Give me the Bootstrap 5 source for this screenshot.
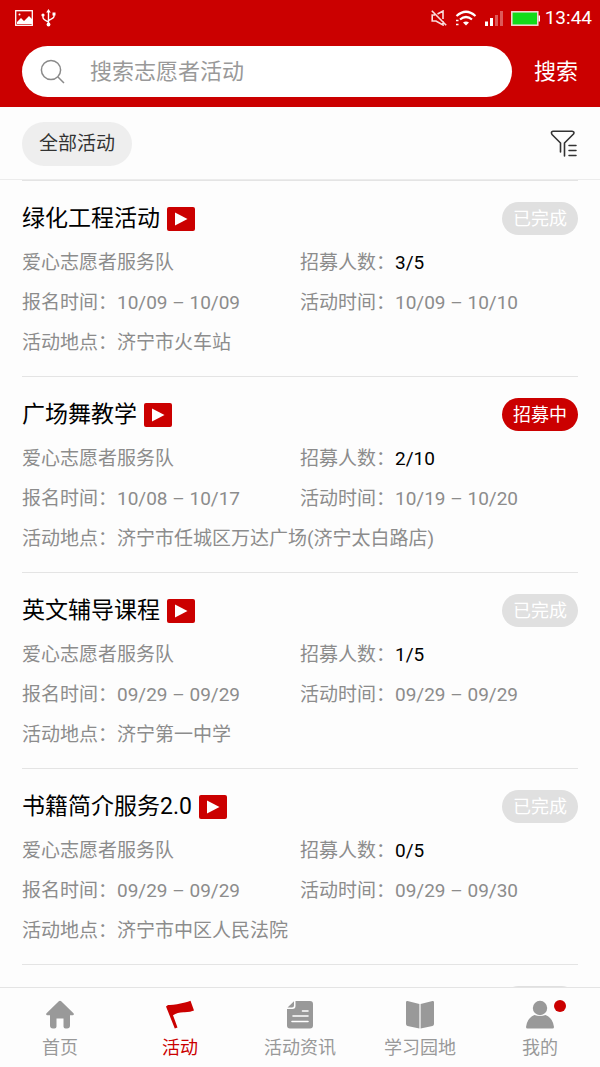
<!DOCTYPE html>
<html lang="zh-CN">
<head>
<meta charset="utf-8">
<meta name="viewport" content="width=device-width, initial-scale=1">
<title>志愿者活动</title>
<link href="https://cdn.jsdelivr.net/npm/bootstrap@5.3.0/dist/css/bootstrap.min.css" rel="stylesheet">
<style>
  :root { --brand: #cb0000; --muted: #8c8c8c; --line: #e4e4e4; }
  body { font-family: Roboto, "Noto Sans CJK SC", sans-serif; font-size: 19px; color: #000; background: #fdfdfd; }
  svg { display: block; flex: none; }
  .app-head { background: var(--brand); padding-bottom: 10px; }
  .status-bar { height: 36px; padding: 0 8px 0 15px; line-height: 36px; }
  .search-row { padding: 0 22px; gap: 22px; margin-top: 10px; }
  .search-box { height: 51px; background: #fff; padding: 0 18px; gap: 25px; }
  .search-box input { font-size: 22px; outline: 0; min-width: 0; }
  .search-box input::placeholder { color: #999; opacity: 1; }
  .search-row button { font-size: 22px; line-height: 32px; }
  .filter-row { padding: 15px 22px 13px; border-bottom: 1px solid #ececec; }
  .pill-all { height: 44px; padding: 0 17px; background: #eee; color: #333; font-size: 19px; }
  .filter-btn { color: #333; }
  .activity { border-top: 1px solid var(--line); margin: 0 22px; padding: 18px 0 13px; }
  .activity header { height: 39px; margin-bottom: 5px; gap: 7px; }
  .activity h2 { font-size: 23px; line-height: 39px; font-weight: 400; }
  .facts { color: var(--muted); line-height: 40px; }
  .facts b { color: #000; font-weight: 400; }
  .state { height: 33px; line-height: 33px; min-width: 76px; font-size: 18px; text-align: center; background: #e0e0e0; color: #fff; }
  .state.open { background: var(--brand); }
  .tab-bar { border-top: 1px solid var(--line); background: #fdfdfd; height: 80px; padding-top: 12px; }
  .tab-bar a { color: #999; font-size: 18px; line-height: 26px; gap: 6px; text-decoration: none; }
  .tab-bar a.active { color: var(--brand); }
  .dot { width: 12px; height: 12px; background: var(--brand); top: 0; left: 28px; }
</style>
</head>
<body>
<svg class="d-none" aria-hidden="true">
  <symbol id="video" viewBox="0 0 28 24"><rect width="28" height="24" rx="2" fill="#cb0000"/><path d="M8 5.500v13l12.500-6.500z" fill="#fff"/></symbol>
</svg>
<div class="vh-100 d-flex flex-column overflow-hidden">
  <div class="app-head flex-shrink-0 text-white">
    <div class="status-bar d-flex align-items-center">
      <svg width="18" height="16" viewBox="0 0 18 16"><rect x=".7" y=".7" width="16.600" height="14.600" fill="none" stroke="#fff" stroke-width="1.300"/><path d="M2 14v-2l4-4 3 3 5-5 3 3v5z" fill="#fff"/><circle cx="4.500" cy="4.500" r="1" fill="#fff"/></svg>
      <svg class="ms-2" width="15" height="18" viewBox="0 0 15 18" fill="none" stroke="#fff" stroke-width="1.400"><path d="M7.500 2v13M2 6v2.500q0 2 5.500 4.500M13 5v2.500q0 1.500-5.500 4"/><path d="M7.500 0l2.300 3.500H5.200z" fill="#fff" stroke="none"/><circle cx="7.500" cy="15.500" r="1.900" fill="#fff" stroke="none"/><circle cx="2" cy="6" r="1.600" fill="#fff" stroke="none"/><path d="M11.500 3.500h3v3h-3z" fill="#fff" stroke="none"/></svg>
      <div class="ms-auto d-flex align-items-center">
        <svg width="16" height="16" viewBox="0 0 16 16" fill="none" stroke="#f9dcdc" stroke-width="1.600"><path d="M4 5H1.200v6H5l7 4V11M6.500 4L12 1v8M.8.800l14.400 14.400"/></svg>
        <svg class="ms-2" width="22" height="17" viewBox="0 0 22 17" fill="none" stroke="#fff" stroke-width="2.200"><path d="M1.500 6Q11-2.500 20.500 6M5 9.500q6-5 12 0"/><path d="M8 12.500q3-2 6 0l-3 3z" fill="#fff" stroke="none"/><path d="M1 10.500h2.500M1 14.500h2.500" stroke-width="1.500"/></svg>
        <svg class="ms-2" width="18" height="15" viewBox="0 0 18 15" fill="#fff"><path d="M0 10.500h3V15H0zM5 7h3v8H5z"/><path d="M10 4h3v11h-3zM15 0h3v15h-3z" opacity=".35"/></svg>
        <svg class="ms-2" width="30" height="15" viewBox="0 0 30 15"><rect x=".8" y=".8" width="26" height="13.400" fill="#13db1a" stroke="#f9dada" stroke-width="1.500"/><path d="M27.500 4.500H29v6h-1.500z" fill="#fff"/></svg>
        <span class="ms-1">13:44</span>
      </div>
    </div>
    <form class="search-row d-flex align-items-center" role="search">
      <div class="search-box d-flex align-items-center flex-grow-1 rounded-pill">
        <svg width="25" height="25" viewBox="0 0 25 25" fill="none" stroke="#8a8a8a" stroke-width="1.500"><circle cx="11" cy="11" r="9.600"/><path d="M18 18l6 6"/></svg>
        <input class="border-0 bg-transparent p-0 flex-grow-1" type="search" placeholder="搜索志愿者活动" aria-label="搜索志愿者活动">
      </div>
      <button class="border-0 bg-transparent p-0 text-white" type="button">搜索</button>
    </form>
  </div>

  <div class="filter-row d-flex align-items-center justify-content-between flex-shrink-0">
    <button class="pill-all border-0 rounded-pill" type="button">全部活动</button>
    <button class="filter-btn border-0 bg-transparent p-0" type="button" aria-label="筛选">
      <svg width="28" height="28" viewBox="0 0 28 28" fill="none" stroke="currentColor" stroke-width="1.600" stroke-linejoin="round" stroke-linecap="round"><path d="M10.500 22v-9L2 4.500Q.5 1.500 3 1.200h19Q25 1.500 23.500 4L14.500 13v13"/><path d="M19 15.500h7M19 20.500h7M19 25.500h7" stroke-width="1.500"/></svg>
    </button>
  </div>

  <main class="flex-grow-1 overflow-hidden">
    <article class="activity">
      <header class="d-flex align-items-center"><h2 class="m-0">绿化工程活动</h2><svg width="28" height="24"><use href="#video"/></svg><span class="state rounded-pill ms-auto">已完成</span></header>
      <div class="facts row g-0"><div class="col-6">爱心志愿者服务队</div><div class="col-6">招募人数：<b>3/5</b></div><div class="col-6">报名时间：10/09 – 10/09</div><div class="col-6">活动时间：10/09 – 10/10</div><div class="col-12">活动地点：济宁市火车站</div></div>
    </article>
    <article class="activity">
      <header class="d-flex align-items-center"><h2 class="m-0">广场舞教学</h2><svg width="28" height="24"><use href="#video"/></svg><span class="state open rounded-pill ms-auto">招募中</span></header>
      <div class="facts row g-0"><div class="col-6">爱心志愿者服务队</div><div class="col-6">招募人数：<b>2/10</b></div><div class="col-6">报名时间：10/08 – 10/17</div><div class="col-6">活动时间：10/19 – 10/20</div><div class="col-12">活动地点：济宁市任城区万达广场(济宁太白路店)</div></div>
    </article>
    <article class="activity">
      <header class="d-flex align-items-center"><h2 class="m-0">英文辅导课程</h2><svg width="28" height="24"><use href="#video"/></svg><span class="state rounded-pill ms-auto">已完成</span></header>
      <div class="facts row g-0"><div class="col-6">爱心志愿者服务队</div><div class="col-6">招募人数：<b>1/5</b></div><div class="col-6">报名时间：09/29 – 09/29</div><div class="col-6">活动时间：09/29 – 09/29</div><div class="col-12">活动地点：济宁第一中学</div></div>
    </article>
    <article class="activity">
      <header class="d-flex align-items-center"><h2 class="m-0">书籍简介服务2.0</h2><svg width="28" height="24"><use href="#video"/></svg><span class="state rounded-pill ms-auto">已完成</span></header>
      <div class="facts row g-0"><div class="col-6">爱心志愿者服务队</div><div class="col-6">招募人数：<b>0/5</b></div><div class="col-6">报名时间：09/29 – 09/29</div><div class="col-6">活动时间：09/29 – 09/30</div><div class="col-12">活动地点：济宁市中区人民法院</div></div>
    </article>
    <article class="activity">
      <header class="d-flex align-items-center"><span class="state rounded-pill ms-auto"></span></header>
    </article>
  </main>

  <nav class="tab-bar row g-0 flex-shrink-0">
    <a class="col d-flex flex-column align-items-center" href="#">
      <svg width="28" height="29" viewBox="0 0 28 29" fill="currentColor"><path d="M14 .8q.7 0 1.200.5L27.500 13.300q1 1.700-.9 2H24V25.500Q24 28.500 21 28.500h-1.500Q17.500 28.500 17.500 26.500V18.500h-7v8q0 2-2 2H7Q4 28.500 4 25.500V15.300H1.400q-1.900-.3-.9-2L12.800 1.300q.5-.5 1.200-.5z"/></svg>首页</a>
    <a class="col d-flex flex-column align-items-center active" href="#" aria-current="page">
      <svg width="28" height="29" viewBox="0 0 28 29" fill="currentColor"><path d="M0 6.500L2 5Q6 5.300 11 4.300T19 2.500 24.500.8L28 10.500Q24.500 12.300 18 12.200T7 15.200L11.500 27.500 8.800 28.500z"/></svg>活动</a>
    <a class="col d-flex flex-column align-items-center" href="#">
      <svg width="28" height="29" viewBox="0 0 28 29"><path d="M9.500 1H24Q27 1 27 4V25.500Q27 28.500 24 28.500H4Q1 28.500 1 25.500V9H6.500Q9.500 9 9.500 6zM8 1.300V5.500Q8 7.500 6 7.500H1.500z" fill="currentColor"/><path d="M16.500 11H22M7 16h15M6 21.500h16" stroke="#fff" stroke-width="1.600" stroke-linecap="round"/></svg>活动资讯</a>
    <a class="col d-flex flex-column align-items-center" href="#">
      <svg width="28" height="29" viewBox="0 0 28 29" fill="currentColor"><path d="M1.500 1L13.400 4V28.500L1.500 26Q0 25.500 0 24V2.300Q0 .8 1.500 1zM26.500 1L14.600 4V28.500L26.500 26Q28 25.500 28 24V2.300Q28 .8 26.500 1z"/></svg>学习园地</a>
    <a class="col d-flex flex-column align-items-center" href="#">
      <span class="position-relative"><svg width="28" height="29" viewBox="0 0 28 29" fill="currentColor"><circle cx="14" cy="8" r="7.200"/><path d="M0 27Q1 18 8.500 15q5.500 2 11 0Q27 18 28 27q0 1.500-1.500 1.500h-25Q0 28.500 0 27z"/></svg><span class="dot position-absolute rounded-circle"></span></span>我的</a>
  </nav>
</div>
<script src="https://cdn.jsdelivr.net/npm/bootstrap@5.3.0/dist/js/bootstrap.bundle.min.js"></script>
</body>
</html>
